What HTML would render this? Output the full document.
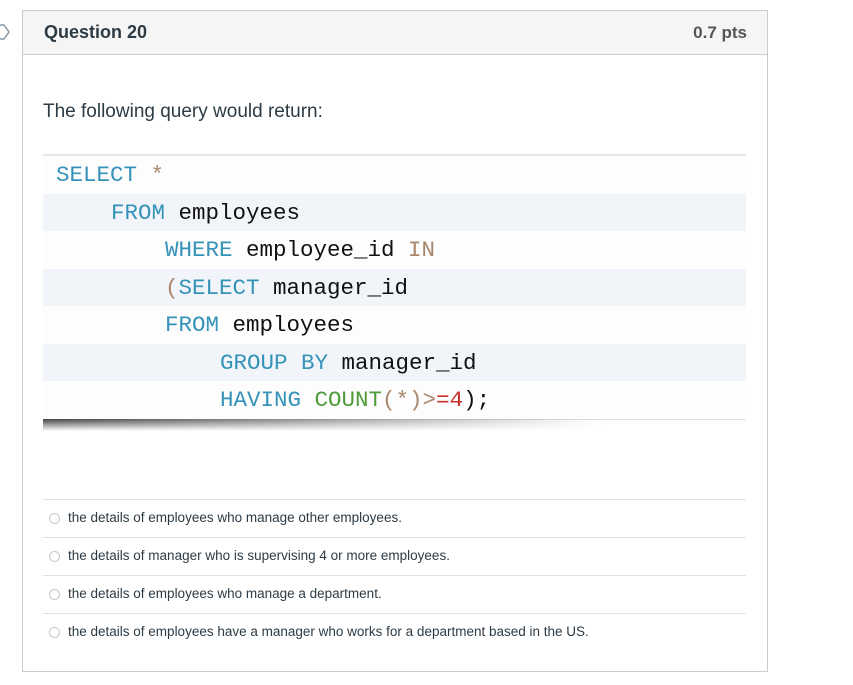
<!DOCTYPE html>
<html><head><style>
body{margin:0;width:853px;height:685px;background:#fff;position:relative;overflow:hidden;font-family:"Liberation Sans",sans-serif;color:#2d3b45}
.box{position:absolute;left:22px;top:10px;width:744px;height:660px;border:1px solid #c7cdd1}
.hdr{position:absolute;left:0;top:0;width:744px;height:43px;background:#f5f5f5;border-bottom:1px solid #c7cdd1}
.hdr .t{position:absolute;left:21px;top:11px;font-size:18px;font-weight:bold;color:#2d3b45}
.hdr .p{position:absolute;right:20px;top:12px;font-size:17px;font-weight:bold;color:#555}
.q{position:absolute;left:43px;top:101px;font-size:19px;color:#2d3b45}
.code{position:absolute;left:43px;top:154px;width:703px;border-top:2px solid #e6e6e6;border-bottom:1px solid #e0e0e0;font-family:"Liberation Mono",monospace;font-size:22.5px;color:#111}
.code div{height:37.5px;line-height:38px;white-space:pre;background:#fdfdfd}
.code div.b{background:#f1f5fa}
.k{color:#3592b8}.o{color:#a8876a}.g{color:#4f9b3a}.r{color:#c9302c}
.sh{position:absolute;left:43px;top:419px;width:560px;height:12px;background:linear-gradient(to right,#444,#888 40%,rgba(255,255,255,0));-webkit-mask:linear-gradient(to bottom,#000,transparent);mask:linear-gradient(to bottom,#000 0%,transparent 100%)}
.ans{position:absolute;left:43px;width:703px;height:38px;border-top:1px solid #dfe2e4;font-size:13.5px;color:#2d3b45}
.ans span{position:absolute;left:25px;top:10px}
.ans i{position:absolute;left:6px;top:13px;width:11px;height:11px;border:1px solid #c8c8c8;border-radius:50%;box-sizing:border-box}
.tab{position:absolute;left:-6px;top:24px;width:18px;height:16px}
</style></head><body>
<svg class="tab" viewBox="0 0 18 16"><path d="M0 1H10L15 8L10 15H0" fill="#fff" stroke="#8a9aa6" stroke-width="1.5"/></svg>
<div class="box"><div class="hdr"><span class="t">Question 20</span><span class="p">0.7 pts</span></div></div>
<div class="q">The following query would return:</div>
<div class="code">
<div style="padding-left:13px"><span class="k">SELECT</span> <span class="o">*</span></div>
<div class="b" style="padding-left:68px"><span class="k">FROM</span> employees</div>
<div style="padding-left:122px"><span class="k">WHERE</span> employee_id <span class="o">IN</span></div>
<div class="b" style="padding-left:122px"><span class="o">(</span><span class="k">SELECT</span> manager_id</div>
<div style="padding-left:122px"><span class="k">FROM</span> employees</div>
<div class="b" style="padding-left:177px"><span class="k">GROUP BY</span> manager_id</div>
<div style="padding-left:177px"><span class="k">HAVING</span> <span class="g">COUNT</span><span class="o">(*)&gt;</span><span class="r">=4</span>);</div>
</div>
<div class="sh"></div>
<div class="ans" style="top:499px"><i></i><span>the details of employees who manage other employees.</span></div>
<div class="ans" style="top:537px"><i></i><span>the details of manager who is supervising 4 or more employees.</span></div>
<div class="ans" style="top:575px"><i></i><span>the details of employees who manage a department.</span></div>
<div class="ans" style="top:613px"><i></i><span>the details of employees have a manager who works for a department based in the US.</span></div>
</body></html>
